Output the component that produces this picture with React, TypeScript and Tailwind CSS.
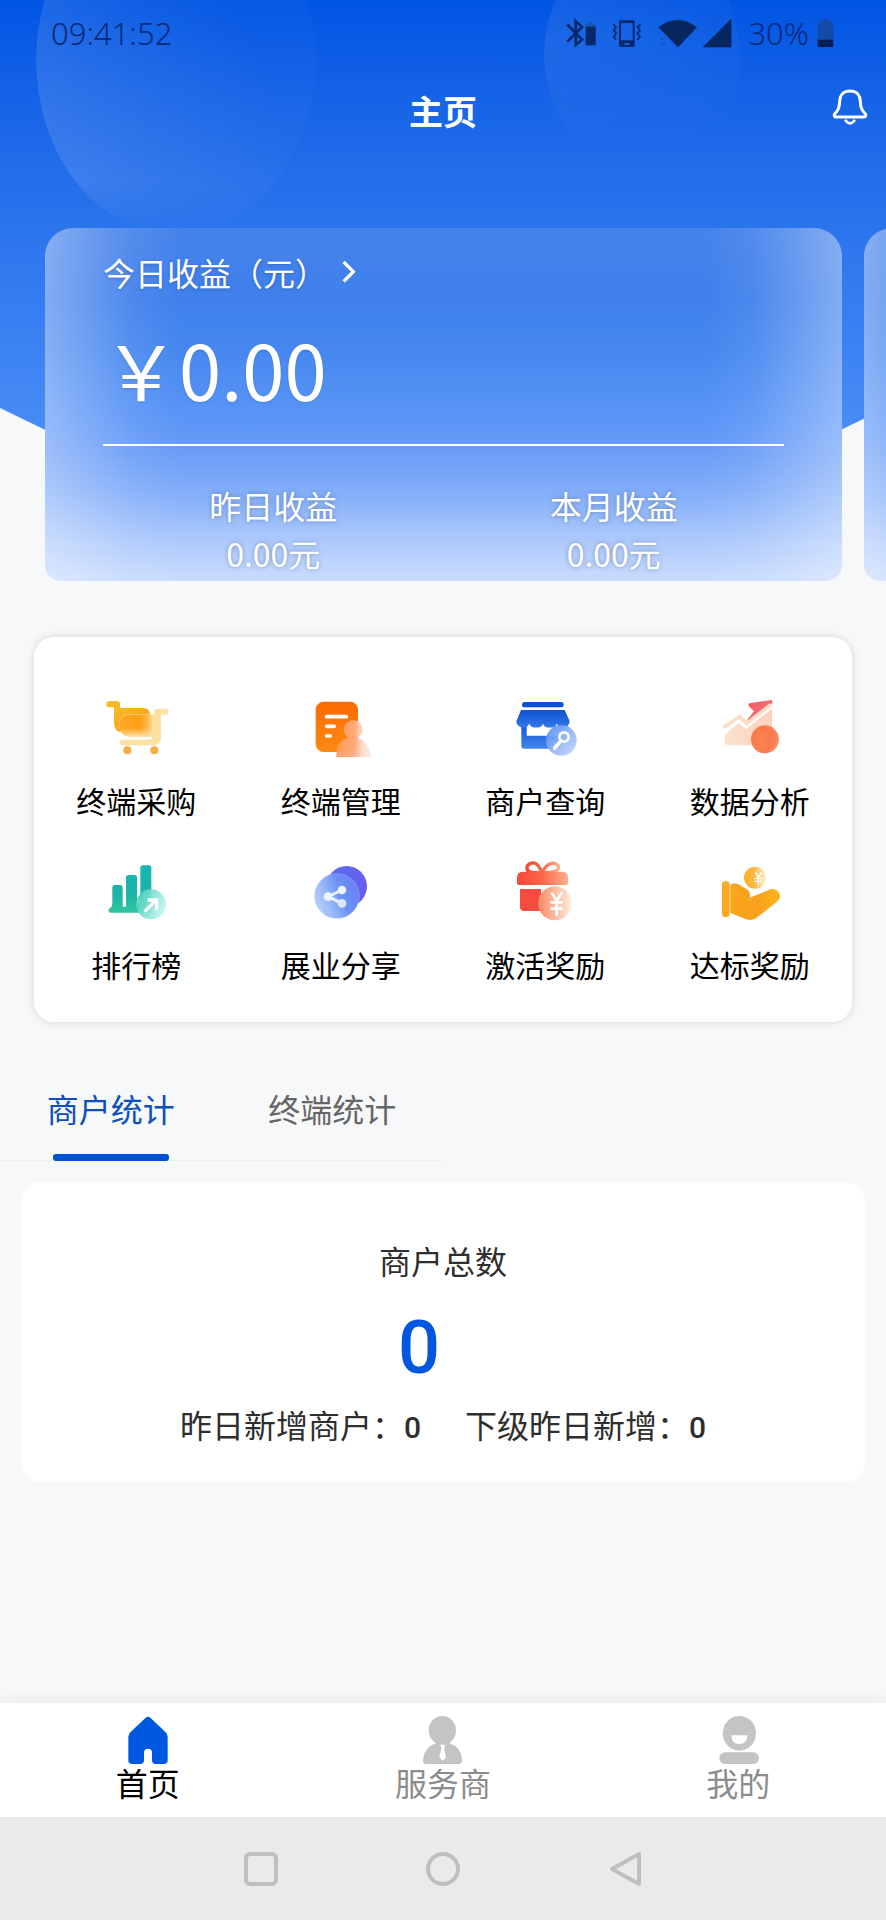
import { useState } from "react";
import type { ReactNode } from "react";

function CartIcon() {
  return (
    <svg viewBox="121 48 216 216" className="size-[72px]" aria-hidden="true">
      <defs>
        <linearGradient id="cartBack" x1="0" y1="0" x2="1" y2="1">
          <stop offset="0" stopColor="#fbc02d" />
          <stop offset="1" stopColor="#f99a12" />
        </linearGradient>
        <linearGradient id="cartBlend" x1="0" y1="0" x2="1" y2="0">
          <stop offset="0" stopColor="#ffa826" />
          <stop offset="0.6" stopColor="#ff9f14" />
          <stop offset="0.85" stopColor="#feb950" />
          <stop offset="1" stopColor="#fde1a0" />
        </linearGradient>
        <linearGradient id="cartFade" x1="0" y1="0" x2="0" y2="1">
          <stop offset="0.6" stopColor="#fde2a4" stopOpacity="0" />
          <stop offset="1" stopColor="#fde2a4" />
        </linearGradient>
      </defs>
      <path d="M149 63H172Q181 63 181 72V84H250Q271 84 271 105V157H190Q163 157 163 130V82H149A9.500 9.500 0 0 1 149 63Z" fill="url(#cartBack)" />
      <path d="M178 134Q178 103 208 103H284V96Q284 86 294 86H317A9 9 0 0 1 317 104H304V172Q304 196 280 196H188A8.500 8.500 0 0 1 188 179H270Q277 179 277 170H214Q178 170 178 134Z" fill="#fde1a0" />
      <path d="M179 134Q179 104 208 104H280V169H214Q179 169 179 134Z" fill="url(#cartBlend)" />
      <path d="M179 134Q179 104 208 104H281V170H214Q179 170 179 134Z" fill="url(#cartFade)" />
      <circle cx="203" cy="211" r="12" fill="#f8ad3c" />
      <circle cx="284" cy="211" r="12" fill="#f8ad3c" />
    </svg>
  );
}

function TerminalIcon() {
  return (
    <svg viewBox="735 48 216 216" className="size-[72px]" aria-hidden="true">
      <defs>
        <linearGradient id="docFill" x1="0" y1="0" x2="0" y2="1">
          <stop offset="0" stopColor="#ff6a00" />
          <stop offset="1" stopColor="#fb8a12" />
        </linearGradient>
        <linearGradient id="personFill" x1="0" y1="0" x2="1" y2="0">
          <stop offset="0" stopColor="#ff9a5c" />
          <stop offset="0.5" stopColor="#ffab7c" />
          <stop offset="0.75" stopColor="#fdd9c8" />
          <stop offset="1" stopColor="#feeee6" />
        </linearGradient>
      </defs>
      <rect x="767" y="65" width="127" height="151" rx="24" fill="url(#docFill)" />
      <path d="M800 110H859M800 139H823M800 168H811" stroke="#fff" strokeWidth="11" strokeLinecap="round" />
      <path d="M829 231Q829 181 866 173A28 28 0 1 1 893 173Q926 184 935 231Z" fill="url(#personFill)" fillOpacity="0.94" />
    </svg>
  );
}

function ShopIcon() {
  return (
    <svg viewBox="90 48 216 216" className="size-[72px]" aria-hidden="true">
      <defs>
        <linearGradient id="shopBase" x1="0" y1="0" x2="0" y2="1">
          <stop offset="0" stopColor="#1457d6" />
          <stop offset="1" stopColor="#4287f0" />
        </linearGradient>
        <linearGradient id="awning" x1="0" y1="0" x2="0" y2="1">
          <stop offset="0" stopColor="#0d52cf" />
          <stop offset="1" stopColor="#3378e8" />
        </linearGradient>
        <linearGradient id="lens" x1="0" y1="0" x2="1" y2="1">
          <stop offset="0" stopColor="#4d86ee" />
          <stop offset="0.5" stopColor="#8fb4f6" />
          <stop offset="1" stopColor="#c6d9fb" />
        </linearGradient>
      </defs>
      <rect x="129" y="66" width="125" height="16" rx="8" fill="#0b51cd" />
      <path d="M127 138H143V167H240V206H134Q127 206 127 199Z" fill="url(#shopBase)" />
      <path d="M126 90H257L272 124Q270 142 252 143Q240 143 233 131A21 15 0 0 1 192 131A21 15 0 0 1 151 131Q144 143 132 143Q114 142 112 124Z" fill="url(#awning)" />
      <circle cx="247" cy="181" r="46" fill="url(#lens)" fillOpacity="0.93" />
      <circle cx="255" cy="171" r="14" fill="none" stroke="#fff" strokeWidth="8" />
      <path d="M241 188L227 204" stroke="#fff" strokeWidth="11" strokeLinecap="round" />
    </svg>
  );
}

function AnalysisIcon() {
  return (
    <svg viewBox="704 48 216 216" className="size-[72px]" aria-hidden="true">
      <defs>
        <linearGradient id="arrowRed" x1="0" y1="0" x2="1" y2="1">
          <stop offset="0" stopColor="#f0515e" />
          <stop offset="1" stopColor="#f5868a" />
        </linearGradient>
        <radialGradient id="analysisDot" cx="0.4" cy="0.5" r="0.7">
          <stop offset="0" stopColor="#fb8048" />
          <stop offset="0.6" stopColor="#fb7145" />
          <stop offset="1" stopColor="#fa9a72" />
        </radialGradient>
        <linearGradient id="areaFill" x1="0" y1="0" x2="1" y2="0">
          <stop offset="0" stopColor="#fbe2cd" />
          <stop offset="1" stopColor="#fbd2c0" />
        </linearGradient>
      </defs>
      <path d="M811 70L874 60Q881 60 879 68L858 104L800 124L824 94L808 78Q806 72 811 70Z" fill="url(#arrowRed)" />
      <path d="M736 166L776 130L804 142L878 80V180Q878 196 862 196H750Q736 196 736 184Z" fill="url(#areaFill)" />
      <path d="M732 143L781 110L803 130L876 74" fill="none" stroke="#f9dfc5" strokeWidth="12" />
      <path d="M731 155L777 124L800 143L879 81" fill="none" stroke="#fff" strokeWidth="6" />
      <circle cx="857" cy="178" r="42" fill="url(#analysisDot)" fillOpacity="0.94" />
      <path d="M820 196H860Q878 196 878 178V142" fill="none" stroke="#f9845c" strokeOpacity="0.7" strokeWidth="3" />
    </svg>
  );
}

function RankIcon() {
  return (
    <svg viewBox="121 60 216 216" className="size-[72px]" aria-hidden="true">
      <defs>
        <linearGradient id="bars" gradientUnits="userSpaceOnUse" x1="0" y1="76" x2="0" y2="218">
          <stop offset="0" stopColor="#14b8b4" />
          <stop offset="0.6" stopColor="#1cb3a8" />
          <stop offset="1" stopColor="#2fc59c" />
        </linearGradient>
        <linearGradient id="rankBubble" x1="0" y1="0" x2="1" y2="0.4">
          <stop offset="0" stopColor="#3fcab5" />
          <stop offset="0.5" stopColor="#7adfd0" />
          <stop offset="1" stopColor="#bff3ea" />
        </linearGradient>
      </defs>
      <path d="M158 143Q158 135 166 135H181Q189 135 189 143V200H199V113Q199 105 207 105H224Q232 105 232 113V190H242V84Q242 76 250 76H267Q275 76 275 84V218H154A7 7 0 0 1 150 205Q158 202 158 190Z" fill="url(#bars)" />
      <circle cx="274" cy="193" r="45" fill="url(#rankBubble)" fillOpacity="0.93" />
      <path d="M255 215L289 181M264 180H291V209" fill="none" stroke="#fff" strokeWidth="10" />
    </svg>
  );
}

function ShareIcon() {
  return (
    <svg viewBox="735 60 216 216" className="size-[72px]" aria-hidden="true">
      <defs>
        <linearGradient id="shareBack" x1="0" y1="0" x2="1" y2="1">
          <stop offset="0" stopColor="#5b6cf0" />
          <stop offset="1" stopColor="#6c56f2" />
        </linearGradient>
        <linearGradient id="shareFront" x1="0" y1="0.7" x2="1" y2="0.3">
          <stop offset="0" stopColor="#b9cffa" />
          <stop offset="0.3" stopColor="#9ab8f9" />
          <stop offset="0.6" stopColor="#6a92f5" />
          <stop offset="1" stopColor="#6a80f5" />
        </linearGradient>
      </defs>
      <circle cx="860" cy="139" r="61" fill="url(#shareBack)" />
      <circle cx="831" cy="168" r="67" fill="url(#shareFront)" stroke="#9fb6fa" strokeOpacity="0.7" strokeWidth="2" />
      <path d="M846 150L804 170L846 190" fill="none" stroke="#eaf1ff" strokeWidth="9" />
      <circle cx="846" cy="150" r="13" fill="#eef4ff" />
      <circle cx="804" cy="170" r="13" fill="#eef4ff" />
      <circle cx="846" cy="190" r="13" fill="#dbe6fe" />
    </svg>
  );
}

function GiftIcon() {
  return (
    <svg viewBox="90 60 216 216" className="size-[72px]" aria-hidden="true">
      <defs>
        <linearGradient id="giftLid" x1="0" y1="0" x2="1" y2="0">
          <stop offset="0" stopColor="#f9453c" />
          <stop offset="0.5" stopColor="#fb6a48" />
          <stop offset="1" stopColor="#fbb18e" />
        </linearGradient>
        <linearGradient id="giftCoin" x1="0" y1="0" x2="1" y2="0">
          <stop offset="0" stopColor="#f98668" />
          <stop offset="0.4" stopColor="#fbb195" />
          <stop offset="0.8" stopColor="#fcdac7" />
          <stop offset="1" stopColor="#fef1ea" />
        </linearGradient>
      </defs>
      <path d="M190 98C168 98 142 100 144 82C146 68 168 64 176 76Q184 86 190 98C196 84 204 72 218 70C236 68 246 84 232 92C220 99 204 98 190 98" fill="none" stroke="url(#giftLid)" strokeWidth="10" strokeLinejoin="round" />
      <path d="M114 113Q114 95 132 95H249Q267 95 267 113V129Q267 135 261 135H120Q114 135 114 129Z" fill="url(#giftLid)" />
      <path d="M123 147H186V213H135Q123 213 123 201Z" fill="#f84b3f" />
      <circle cx="228" cy="190" r="51" fill="url(#giftCoin)" />
      <path d="M219 160L233 182L247 160M233 182V224M218 187H248M218 206H248" fill="none" stroke="#fff" strokeWidth="8" strokeLinecap="round" />
    </svg>
  );
}

function HandIcon() {
  return (
    <svg viewBox="704 60 216 216" className="size-[72px]" aria-hidden="true">
      <defs>
        <linearGradient id="handFill" x1="0" y1="0" x2="1" y2="0">
          <stop offset="0" stopColor="#fba41c" />
          <stop offset="0.5" stopColor="#f99f1c" />
          <stop offset="1" stopColor="#fdb51c" />
        </linearGradient>
        <linearGradient id="handCoin" x1="0" y1="0" x2="1" y2="0">
          <stop offset="0" stopColor="#fdb11a" />
          <stop offset="0.5" stopColor="#fbbb4e" />
          <stop offset="1" stopColor="#fff3d6" />
        </linearGradient>
      </defs>
      <circle cx="827" cy="113" r="33" fill="url(#handCoin)" />
      <path d="M829 98L837 112L845 98M837 112V134M827 115H847M827 124H847" fill="none" stroke="#fff" strokeWidth="4" strokeLinecap="round" />
      <path d="M753 134Q766 127 780 134L805 149Q815 157 811 173L868 150Q888 142 899 158Q908 174 892 186L834 232Q820 244 800 238L753 219Z" fill="url(#handFill)" />
      <rect x="728" y="124" width="23" height="107" rx="10" fill="#fbaa20" />
      <path d="M753 160Q768 154 784 166L808 180L824 172" fill="none" stroke="#fbb540" strokeOpacity="0.6" strokeWidth="4" />
    </svg>
  );
}

const SHORTCUTS: { label: string; icon: ReactNode }[] = [
  { label: "终端采购", icon: <CartIcon /> },
  { label: "终端管理", icon: <TerminalIcon /> },
  { label: "商户查询", icon: <ShopIcon /> },
  { label: "数据分析", icon: <AnalysisIcon /> },
  { label: "排行榜", icon: <RankIcon /> },
  { label: "展业分享", icon: <ShareIcon /> },
  { label: "激活奖励", icon: <GiftIcon /> },
  { label: "达标奖励", icon: <HandIcon /> },
];

function HomeIcon() {
  return (
    <svg viewBox="371 78 144 144" className="size-12" aria-hidden="true">
      <path d="M436 83Q443 77 450 83L496 127Q502 133 502 141V210Q502 222 490 222H466Q455 222 455 211V188A12 12 0 0 0 431 188V211Q431 222 420 222H396Q384 222 384 210V141Q384 133 390 127Z" fill="#0057e0" />
    </svg>
  );
}

function AgentIcon() {
  return (
    <svg viewBox="1257 78 144 144" className="size-12" aria-hidden="true">
      <path d="M1327 78A42 42 0 0 1 1368 120Q1368 146 1348 159Q1384 172 1386 208Q1387 222 1377 222H1279Q1268 222 1269 210Q1272 172 1308 159Q1286 146 1286 120A42 42 0 0 1 1327 78Z" fill="#c4c4c4" />
      <path d="M1321 164H1335L1332 176L1338 202L1328 213L1318 202L1324 176Z" fill="#fff" />
    </svg>
  );
}

function MineIcon() {
  return (
    <svg viewBox="814 78 144 144" className="size-12" aria-hidden="true">
      <ellipse cx="890" cy="130" rx="50" ry="52" fill="#c4c4c4" />
      <path d="M866 136H914Q914 162 890 162T866 136Z" fill="#fff" />
      <rect x="830" y="187" width="119" height="35" rx="17" fill="#c4c4c4" />
    </svg>
  );
}

function StatusBar() {
  return (
    <div className="flex h-[66px] items-center justify-between px-[51px] font-['Noto_Sans'] text-[31px] font-light text-[#08287a]">
      <time>09:41:52</time>
      <div className="flex items-center">
        <svg viewBox="370 53 93 93" className="size-[31px]" aria-label="蓝牙">
          <path d="M374 73L418 118L399 134V63L418 80L374 124" fill="none" stroke="#08286b" strokeWidth="8" />
          <rect x="429" y="78" width="30" height="57" fill="#08286b" />
          <path d="M429 78V70H437V64H451V70H459V78Z" fill="#1d55b4" />
        </svg>
        <svg viewBox="508 53 93 93" className="ml-[15px] size-[31px]" aria-label="振动">
          <path d="M535 60H570Q576 60 576 66V134Q576 140 570 140H535Q529 140 529 134V66Q529 60 535 60ZM535 68V120H570V68ZM545 128V133H560V128Z" fill="#08286b" fillRule="evenodd" />
          <path d="M512 72L520 80L513 90L521 99L513 109L520 118M593 72L585 80L592 90L584 99L592 109L585 118" fill="none" stroke="#08286b" strokeWidth="5" />
        </svg>
        <svg viewBox="640 53 120 93" className="ml-[14px] h-[31px] w-10" aria-label="无线网络">
          <path d="M644 81Q702 37 760 81L703 141Z" fill="#06265f" />
          <path d="M648 119L655 109L662 119ZM648 126L655 136L662 126Z" fill="#1a53b4" />
        </svg>
        <svg viewBox="778 53 93 93" className="ml-[6px] size-[31px]" aria-label="信号">
          <path d="M862 57V140H779Z" fill="#06265f" stroke="#06265f" strokeWidth="2" strokeLinejoin="round" />
        </svg>
        <span className="ml-[14px]">30%</span>
        <svg viewBox="1120 53 54 93" className="ml-2 h-[31px] w-[18px]" aria-label="电池">
          <path d="M1122 70Q1122 65 1133 64V59Q1133 57 1136 57H1155Q1158 57 1158 59V64Q1169 65 1169 70V118H1122Z" fill="#144aa8" />
          <path d="M1122 118H1169V140H1122Z" fill="#052055" />
        </svg>
      </div>
    </div>
  );
}

const SLIDE =
  "w-[calc(100%-44px)] shrink-0 rounded-t-[28px] rounded-b-[16px] bg-[linear-gradient(to_right,rgba(255,255,255,0.35),rgba(255,255,255,0.22)_5%,rgba(255,255,255,0.07)_11%,transparent_17%,transparent_83%,rgba(255,255,255,0.07)_89%,rgba(255,255,255,0.22)_95%,rgba(255,255,255,0.35)),linear-gradient(to_bottom,#4683ea,#3f80ec_20%,#4688ef_35%,#5c96f7_55%,#699df6_63%,#83aef9_75%,#aecafc_89%,#cadcfd)]";

function Slide() {
  return (
    <article className={SLIDE}>
      <div className="px-[58px] pt-5 pb-1 text-white">
        <button type="button" className="flex h-12 items-center gap-3 text-[32px] leading-[48px] [text-shadow:0_1px_3px_rgba(40,80,160,0.5)]">
          <span>今日收益（元）</span>
          <svg viewBox="1020 120 60 84" className="h-7 w-5" aria-hidden="true">
            <path d="M1034 132L1063 161L1034 190" fill="none" stroke="#fff" strokeWidth="10" />
          </svg>
        </button>
        <p className="mt-6 text-[76px] leading-[96px] [text-shadow:0_1px_2px_rgba(40,80,160,0.3)]">￥0.00</p>
        <hr className="mt-7 h-[2px] border-0 bg-white" />
        <dl className="mt-[35px] grid grid-cols-2 text-center text-[32px] leading-[48px] [text-shadow:0_0_4px_rgba(60,80,130,0.5)]">
          <div>
            <dt>昨日收益</dt>
            <dd>0.00元</dd>
          </div>
          <div>
            <dt>本月收益</dt>
            <dd>0.00元</dd>
          </div>
        </dl>
      </div>
    </article>
  );
}

const STATS = ["商户统计", "终端统计"];

const NAV = [
  { label: "首页", icon: <HomeIcon />, active: true },
  { label: "服务商", icon: <AgentIcon />, active: false },
  { label: "我的", icon: <MineIcon />, active: false },
];

export default function App() {
  const [tab, setTab] = useState(0);

  return (
    <div lang="zh-CN" className="relative isolate flex min-h-screen flex-col overflow-x-hidden bg-[#f6f8fa] font-['Noto_Sans_CJK_SC','Noto_Sans',sans-serif]">
      <div aria-hidden="true" className="absolute inset-x-0 top-0 -z-10 h-[440px] overflow-hidden bg-linear-to-b from-[#0055e3] via-[#2973ec] to-[#4a8df7] [clip-path:polygon(0_0,100%_0,100%_408px,calc(100%-60px)_437px,60px_437px,0_408px)]">
        <div className="absolute -top-[115px] left-9 h-[350px] w-[280px] rounded-[50%] bg-[linear-gradient(75deg,rgba(255,255,255,0.14),rgba(255,255,255,0.07)_40%,rgba(255,255,255,0.02)_75%,rgba(255,255,255,0.02))] [mask-image:linear-gradient(to_bottom,black_85%,transparent)]" />
        <div className="absolute -top-[61px] left-[544px] h-[232px] w-[196px] rounded-[50%] bg-linear-to-r from-white/8 to-white/3 [mask-image:linear-gradient(to_bottom,black_45%,transparent_90%)]" />
      </div>

      <header>
        <StatusBar />
        <div className="grid h-[90px] grid-cols-[1fr_auto_1fr] items-center pr-[18px]">
          <h1 className="col-start-2 pl-[18px] text-[34px] leading-[48px] font-bold text-white">主页</h1>
          <button type="button" aria-label="消息通知" className="justify-self-end pb-1">
            <svg viewBox="1162 267 108 120" className="h-10 w-9" aria-hidden="true">
              <path d="M1216 273C1194 273 1185 288 1185 304C1185 326 1178 333 1169 343Q1167 351 1175 351H1257Q1265 351 1263 343C1254 333 1247 326 1247 304C1247 288 1238 273 1216 273Z" fill="none" stroke="#fff" strokeWidth="9" strokeLinejoin="round" />
              <path d="M1203 362Q1216 378 1229 362" fill="none" stroke="#fff" strokeWidth="8" strokeLinecap="round" />
            </svg>
          </button>
        </div>
      </header>

      <main className="flex-1">
        <section aria-label="收益" className="flex gap-[22px] overflow-hidden pt-[72px] pl-[45px]">
          <Slide />
          <div aria-hidden="true" className={SLIDE} />
        </section>

        <ul className="mx-[34px] mt-14 grid grid-cols-4 gap-y-9 rounded-[20px] bg-white pt-[59px] pb-[34px] shadow-[0_0_8px_rgba(0,0,0,0.14)]">
          {SHORTCUTS.map((item) => (
            <li key={item.label}>
              <button type="button" className="flex w-full flex-col items-center gap-[10px] pb-[2px] text-[30px] leading-[44px] text-black">
                {item.icon}
                <span>{item.label}</span>
              </button>
            </li>
          ))}
        </ul>

        <div role="tablist" className="mt-[38px] grid w-1/2 grid-cols-2">
          {STATS.map((label, i) => (
            <button
              key={label}
              type="button"
              role="tab"
              aria-selected={tab === i}
              onClick={() => setTab(i)}
              className={`flex h-[101px] flex-col items-center justify-between border-b border-[#edeff2] pt-6 text-[32px] leading-[48px] ${tab === i ? "text-[#0c50bd]" : "text-[#666666]"}`}
            >
              <span>{label}</span>
              <span className={`-mb-px h-[7px] w-[116px] rounded-[3px] ${tab === i ? "bg-[#0052d4]" : "bg-transparent"}`} />
            </button>
          ))}
        </div>

        <section className="mx-[21px] mt-[21px] rounded-[20px] bg-white pt-[54px] pb-[34px] text-center text-[#2e2e2e]">
          <h2 className="text-[32px] leading-[48px]">商户总数</h2>
          <p className="mt-6 pr-12 font-[Roboto] text-[74px] leading-[80px] font-medium text-[#0057e0]">0</p>
          <div className="mt-3 flex justify-center gap-[44px] text-[32px] leading-[48px]">
            <p>
              昨日新增商户：<span className="font-[Roboto] text-[30px] leading-none font-medium">0</span>
            </p>
            <p>
              下级昨日新增：<span className="font-[Roboto] text-[30px] leading-none font-medium">0</span>
            </p>
          </div>
        </section>
      </main>

      <nav className="grid grid-cols-3 bg-white pt-[13px] pb-[17px] shadow-[0_-2px_16px_rgba(0,0,0,0.07)]">
        {NAV.map((item) => (
          <a key={item.label} href="#" className={`flex flex-col items-center text-[32px] leading-9 ${item.active ? "text-black" : "text-[#8c8c8c]"}`}>
            {item.icon}
            <span>{item.label}</span>
          </a>
        ))}
      </nav>

      <footer className="z-10 flex h-[103px] items-center justify-center gap-[146px] bg-[#eaeaea]">
        <button type="button" aria-label="最近任务">
          <svg viewBox="0 0 36 36" className="size-9" aria-hidden="true">
            <rect x="3" y="3" width="30" height="30" rx="4" fill="none" stroke="#bfbfbf" strokeWidth="4" />
          </svg>
        </button>
        <button type="button" aria-label="主屏幕">
          <svg viewBox="0 0 36 36" className="size-9" aria-hidden="true">
            <circle cx="18" cy="18" r="15" fill="none" stroke="#bfbfbf" strokeWidth="4" />
          </svg>
        </button>
        <button type="button" aria-label="返回">
          <svg viewBox="0 0 36 36" className="size-9" aria-hidden="true">
            <path d="M32 3V33L5 18Z" fill="none" stroke="#bfbfbf" strokeWidth="4" strokeLinejoin="round" />
          </svg>
        </button>
      </footer>
    </div>
  );
}
